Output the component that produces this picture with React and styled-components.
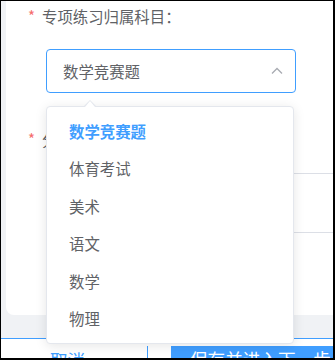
import React from 'react';
import styled, { createGlobalStyle } from 'styled-components';

const Global = createGlobalStyle`
  html, body { margin: 0; padding: 0; background: #fff; }
  body { font-family: "Noto Sans CJK SC", "Noto Sans", sans-serif; }
`;

const Frame = styled.div`
  position: relative;
  width: 335px;
  height: 360px;
  box-sizing: border-box;
  border-style: solid;
  border-color: #000;
  border-width: 1px 2px 2px 1px;
  overflow: hidden;
  display: flex;
  flex-direction: column;
  background: #f0f2f5;
`;

const Main = styled.div`
  height: 337px;
  flex: none;
  padding-left: 5px;
  box-sizing: border-box;
  display: flex;
`;

const Card = styled.div`
  flex: none;
  width: 360px;
  height: 314px;
  background: #fff;
  border-radius: 0 0 0 8px;
  box-sizing: border-box;
  padding: 4px 0 0 22px;
  display: flex;
  flex-direction: column;
`;

const FormItem = styled.div`
  display: flex;
  flex-direction: column;
  gap: ${p => p.$gap}px;
  margin-bottom: ${p => p.$mb || 0}px;
`;

const Label = styled.div`
  display: flex;
  align-items: center;
  height: 22px;
  font-size: 15.4px;
  color: #606266;
  line-height: 22px;
`;

const Star = styled.span`
  color: #f56c6c;
  width: 14px;
  font-size: 15px;
  line-height: 22px;
`;

const Control = styled.div`
  margin-left: 18px;
`;

const Select = styled.div`
  width: 250px;
  height: 44px;
  box-sizing: border-box;
  border: 1px solid #409eff;
  border-radius: 4px;
  display: flex;
  align-items: center;
  justify-content: space-between;
  padding: 0 11px 0 16px;
  font-size: 15.4px;
  color: #606266;
`;

const Arrow = styled.svg`
  width: 14px;
  height: 14px;
`;

const TextBox = styled.div`
  width: 320px;
  height: 60px;
  box-sizing: border-box;
  border: 1px solid #dcdfe6;
  border-radius: 4px;
`;

const Footer = styled.div`
  flex: 1;
  background: #fff;
  border-top: 1px solid #409eff;
  display: flex;
  align-items: flex-start;
  padding-top: 7px;
`;

const CancelButton = styled.div`
  width: 147px;
  height: 20px;
  box-sizing: border-box;
  border-right: 1px solid #409eff;
  padding-left: 49px;
  font-size: 17.6px;
  line-height: 27px;
  color: #409eff;
  overflow: hidden;
`;

const PrimaryButton = styled.div`
  margin-left: 23px;
  flex: 1;
  height: 20px;
  background: #409eff;
  color: #fff;
  font-size: 17.6px;
  line-height: 26px;
  padding-left: 19px;
  white-space: nowrap;
  overflow: hidden;
`;

const Dropdown = styled.div`
  position: absolute;
  left: 45px;
  top: 105px;
  width: 248px;
  box-sizing: border-box;
  background: #fff;
  border: 1px solid #e4e7ed;
  border-radius: 4px;
  box-shadow: 0 2px 12px 0 rgba(0, 0, 0, 0.1);
  padding: 6px 0;
  &::before {
    content: '';
    position: absolute;
    top: -7px;
    left: 37px;
    border: 6px solid transparent;
    border-top-width: 0;
    border-bottom: 6px solid #e4e7ed;
  }
  &::after {
    content: '';
    position: absolute;
    top: -6px;
    left: 38px;
    border: 5px solid transparent;
    border-top-width: 0;
    border-bottom: 6px solid #fff;
  }
`;

const Item = styled.div`
  height: 37.4px;
  line-height: 37.4px;
  padding: 0 22px;
  font-size: 15.4px;
  color: ${p => (p.$selected ? '#409eff' : '#606266')};
  font-weight: ${p => (p.$selected ? 700 : 400)};
`;

const options = ['数学竞赛题', '体育考试', '美术', '语文', '数学', '物理'];

export default function App() {
  return (
    <>
      <Global />
      <Frame>
        <Main>
          <Card>
            <FormItem $gap={22} $mb={35}>
              <Label><Star>*</Star>专项练习归属科目：</Label>
              <Control>
                <Select>
                  <span>数学竞赛题</span>
                  <Arrow viewBox="0 0 14 14" fill="none">
                    <path d="M2 9.5 L7 4.5 L12 9.5" stroke="#a8abb2" strokeWidth="1.3" />
                  </Arrow>
                </Select>
              </Control>
            </FormItem>
            <FormItem $gap={23}>
              <Label><Star>*</Star>分类描述：</Label>
              <Control>
                <TextBox />
              </Control>
            </FormItem>
          </Card>
        </Main>
        <Footer>
          <CancelButton>取消</CancelButton>
          <PrimaryButton>保存并进入下一步</PrimaryButton>
        </Footer>
        <Dropdown>
          {options.map((o, i) => (
            <Item key={o} $selected={i === 0}>{o}</Item>
          ))}
        </Dropdown>
      </Frame>
    </>
  );
}
